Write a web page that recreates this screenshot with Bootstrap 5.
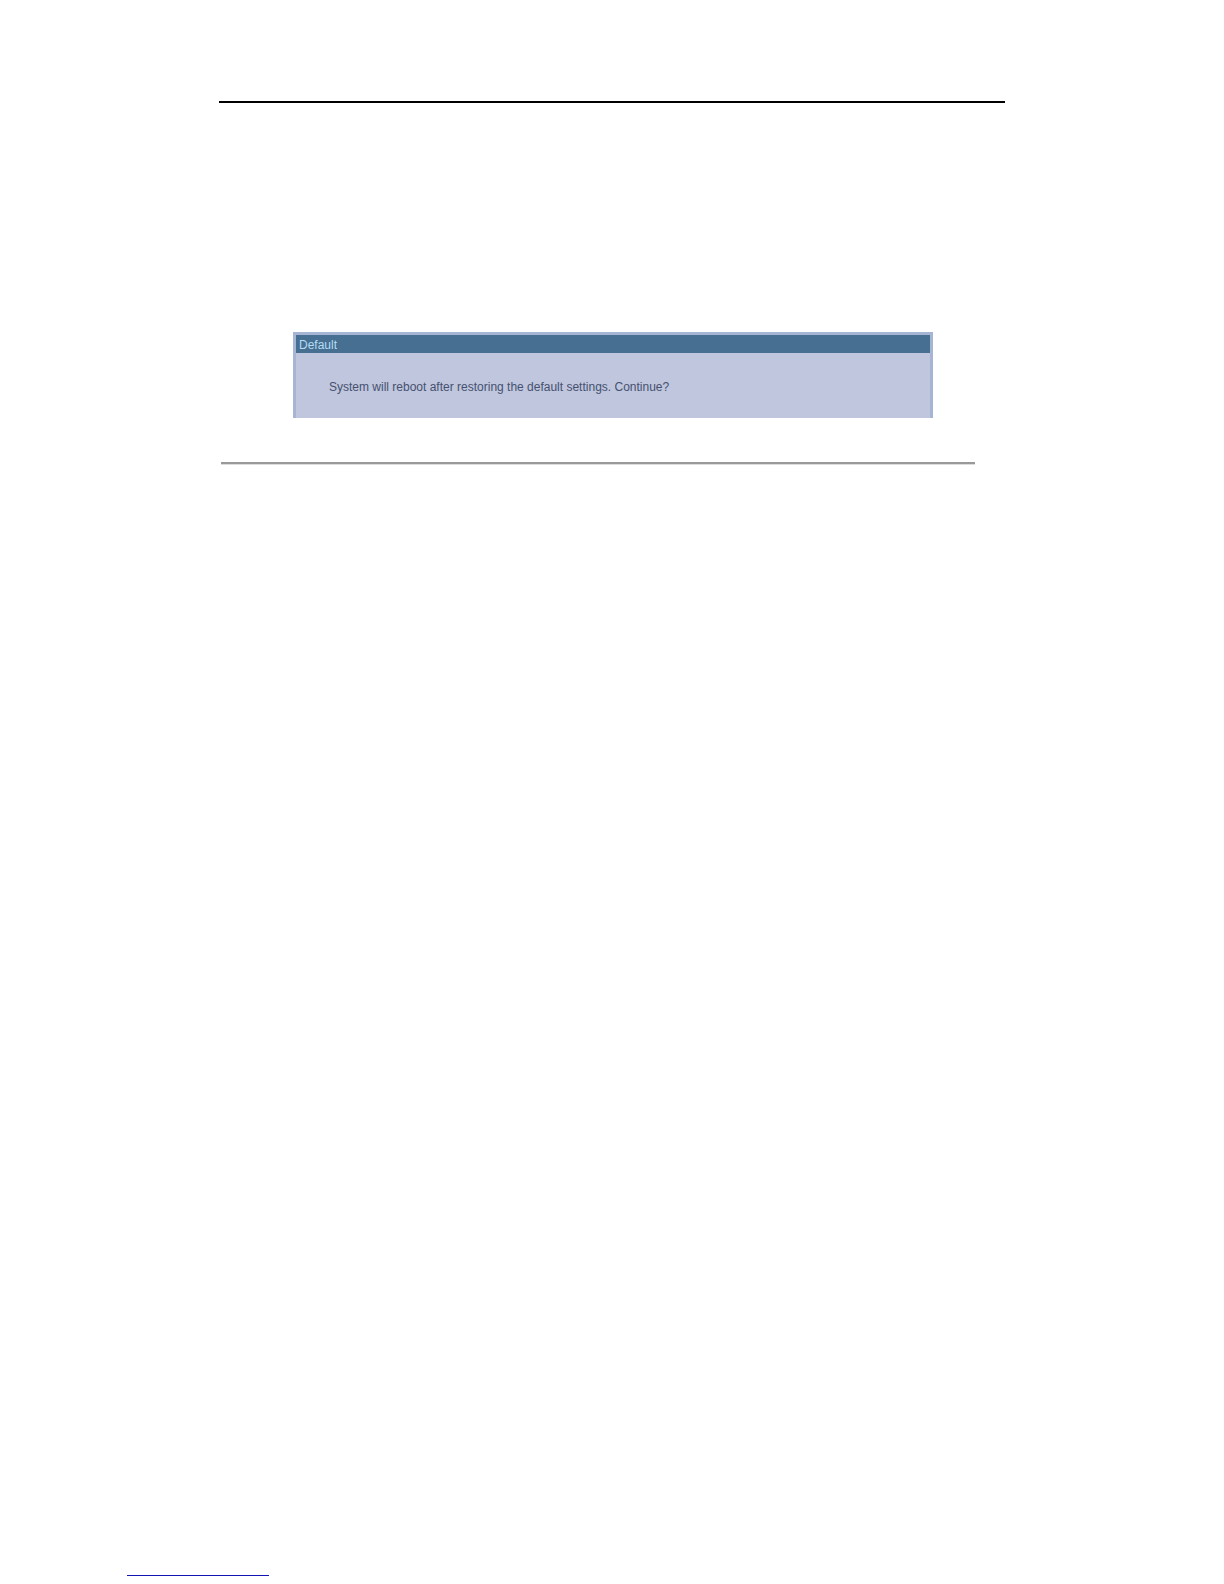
<!DOCTYPE html>
<html lang="en">
<head>
<meta charset="utf-8">
<meta name="viewport" content="width=device-width, initial-scale=1">
<title>Default</title>
<link rel="stylesheet" href="https://cdn.jsdelivr.net/npm/bootstrap@5.3.0/dist/css/bootstrap.min.css">
<style>
body { font-family: "Liberation Sans", Arial, sans-serif; font-size: 12px; }
.sheet { padding: 101px 219px 0; }
.rule { border: 0; opacity: 1; margin: 0; }
.rule-top { height: 2px; background: #000; }
.rule-section { height: 3px; margin: 44px 30px 0 2px; background: #999; border-bottom: 1px solid #ddd; }
.rule-foot { width: 142px; height: 1px; margin: 0 0 8px 127px; background: #1414b4; }
.dialog-box { margin: 229px 72px 0 74px; border: 3px solid #a5b5d3; border-bottom: 0; background: #bfc6dd; }
.dialog-title { height: 18px; padding-left: 3px; background: #466f91; color: #b5dcf5; font-size: 12px; line-height: 20px; }
.dialog-text { padding: 25px 33px 22px; color: #465170; line-height: 18px; }
</style>
</head>
<body class="bg-white">
<div class="min-vh-100 d-flex flex-column">
  <main class="sheet">
    <hr class="rule rule-top">
    <section class="dialog-box" role="dialog" aria-labelledby="dialog-title" aria-describedby="dialog-text">
      <h1 class="dialog-title fw-normal mb-0" id="dialog-title">Default</h1>
      <p class="dialog-text mb-0" id="dialog-text">System will reboot after restoring the default settings. Continue?</p>
    </section>
    <hr class="rule rule-section">
  </main>
  <footer class="mt-auto">
    <hr class="rule rule-foot">
  </footer>
</div>
<script src="https://cdn.jsdelivr.net/npm/bootstrap@5.3.0/dist/js/bootstrap.bundle.min.js"></script>
</body>
</html>
